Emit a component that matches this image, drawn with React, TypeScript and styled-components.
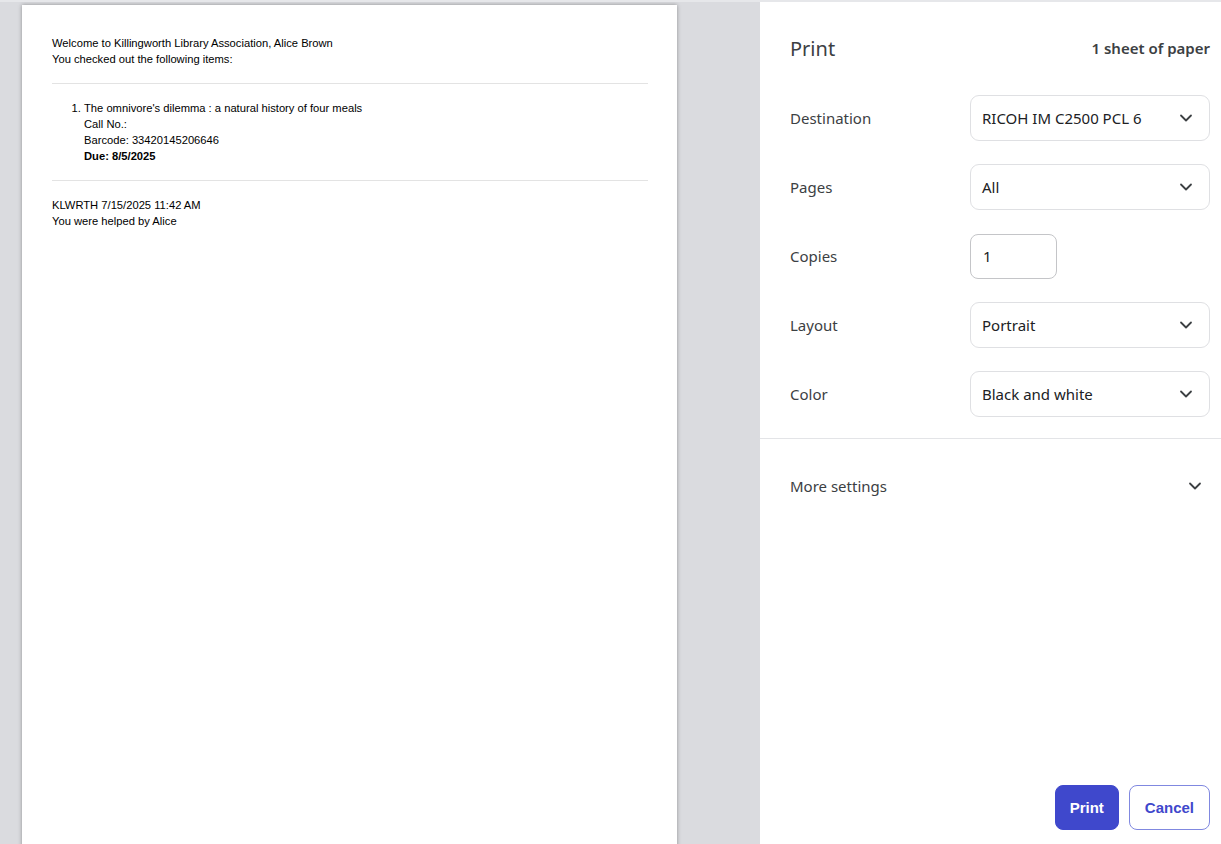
import React from 'react';
import styled, { createGlobalStyle } from 'styled-components';

const GlobalStyle = createGlobalStyle`
  html, body {
    margin: 0;
    padding: 0;
    overflow: hidden;
    background: #ffffff;
  }
`;

const Shell = styled.div`
  display: flex;
  width: 1221px;
  height: 844px;
  overflow: hidden;
`;

const Preview = styled.section`
  width: 760px;
  flex-shrink: 0;
  background-color: #dadbdf;
  border-top: 2px solid #e6e7ea;
  padding: 3px 0 0 22px;
  box-sizing: border-box;
  overflow: hidden;
`;

const Sheet = styled.div`
  width: 655px;
  height: 900px;
  background-color: white;
  box-shadow: 0 0 4px rgba(0, 0, 0, 0.35);
  padding: 30px 29px 0 30px;
  box-sizing: border-box;
  font-family: 'Liberation Sans', Arial, sans-serif;
  font-size: 11.2px;
  line-height: 16px;
  color: #000;
`;

const Line = styled.div<{ $bold?: boolean }>`
  font-weight: ${({ $bold }) => ($bold ? 700 : 400)};
`;

const Rule = styled.hr`
  border: none;
  border-top: 1px solid #e3e3e3;
  margin: 0;
`;

const Block = styled.div<{ $top: number; $bottom: number }>`
  padding: ${({ $top, $bottom }) => `${$top}px 0 ${$bottom}px`};
`;

const ItemList = styled.ol`
  margin: 0;
  padding-left: 32px;
`;

const Panel = styled.aside`
  flex: 1;
  display: flex;
  flex-direction: column;
  background: white;
  border-top: 2px solid #e6e7ea;
  box-sizing: border-box;
  font-family: 'Noto Sans', 'Open Sans', sans-serif;
  color: #3c4043;
`;

const Header = styled.header`
  display: flex;
  justify-content: space-between;
  align-items: center;
  padding: 32px 11px 0 30px;
  height: 28px;
`;

const Title = styled.h1`
  margin: 0;
  font-size: 20px;
  font-weight: 400;
  color: #3c4043;
`;

const SheetCount = styled.span`
  font-size: 15px;
  font-weight: 600;
  color: #3c4043;
`;

const Settings = styled.div`
  display: flex;
  flex-direction: column;
  gap: 23px;
  padding: 33px 11px 21px 30px;
  border-bottom: 1px solid #e3e4e7;
`;

const Row = styled.div`
  display: flex;
  align-items: center;
  min-height: 46px;
`;

const Label = styled.span`
  width: 180px;
  font-size: 15px;
  color: #3c4043;
`;

const Select = styled.div`
  flex: 1;
  height: 46px;
  box-sizing: border-box;
  border: 1px solid #dfe0e3;
  border-radius: 9px;
  display: flex;
  align-items: center;
  justify-content: space-between;
  padding: 0 15px 0 11px;
  font-size: 15px;
  color: #202124;
`;

const NumberBox = styled.div`
  width: 87px;
  height: 45px;
  box-sizing: border-box;
  border: 1px solid #c4c5c8;
  border-radius: 8px;
  display: flex;
  align-items: center;
  padding-left: 12px;
  font-size: 15px;
  color: #202124;
`;

const MoreRow = styled.div`
  display: flex;
  align-items: center;
  justify-content: space-between;
  height: 46px;
  margin-top: 24px;
  padding: 0 18px 0 30px;
  font-size: 15px;
  color: #3c4043;
`;

const Footer = styled.footer`
  margin-top: auto;
  display: flex;
  justify-content: flex-end;
  gap: 10px;
  padding: 0 11px 14px 0;
`;

const Button = styled.button<{ $primary?: boolean }>`
  height: 45px;
  padding: 0 ${({ $primary }) => ($primary ? '14px' : '15px')};
  border-radius: 8px;
  font-family: 'Liberation Sans', Arial, sans-serif;
  font-size: 15px;
  font-weight: 700;
  cursor: pointer;
  background-color: ${({ $primary }) => ($primary ? '#3f48cc' : 'white')};
  color: ${({ $primary }) => ($primary ? 'white' : '#3f48cc')};
  border: 1px solid ${({ $primary }) => ($primary ? '#3f48cc' : '#8088e0')};
`;

const Chevron = () => (
  <svg width="16" height="16" viewBox="0 0 16 16" fill="none">
    <path d="M3 5.5l5 5 5-5" stroke="#3c4043" strokeWidth="1.8" strokeLinecap="round" strokeLinejoin="round" />
  </svg>
);

const selects = [
  { label: 'Destination', value: 'RICOH IM C2500 PCL 6' },
  { label: 'Pages', value: 'All' },
];

const selectsAfter = [
  { label: 'Layout', value: 'Portrait' },
  { label: 'Color', value: 'Black and white' },
];

const App = () => {
  return (
    <>
      <GlobalStyle />
      <Shell>
        <Preview>
          <Sheet>
            <Block $top={0} $bottom={16}>
              <Line>Welcome to Killingworth Library Association, Alice Brown</Line>
              <Line>You checked out the following items:</Line>
            </Block>
            <Rule />
            <Block $top={16} $bottom={16}>
              <ItemList>
                <li>
                  <Line>The omnivore's dilemma : a natural history of four meals</Line>
                  <Line>Call No.:</Line>
                  <Line>Barcode: 33420145206646</Line>
                  <Line $bold>Due: 8/5/2025</Line>
                </li>
              </ItemList>
            </Block>
            <Rule />
            <Block $top={16} $bottom={0}>
              <Line>KLWRTH 7/15/2025 11:42 AM</Line>
              <Line>You were helped by Alice</Line>
            </Block>
          </Sheet>
        </Preview>
        <Panel>
          <Header>
            <Title>Print</Title>
            <SheetCount>1 sheet of paper</SheetCount>
          </Header>
          <Settings>
            {selects.map((s) => (
              <Row key={s.label}>
                <Label>{s.label}</Label>
                <Select>
                  <span>{s.value}</span>
                  <Chevron />
                </Select>
              </Row>
            ))}
            <Row>
              <Label>Copies</Label>
              <NumberBox>1</NumberBox>
            </Row>
            {selectsAfter.map((s) => (
              <Row key={s.label}>
                <Label>{s.label}</Label>
                <Select>
                  <span>{s.value}</span>
                  <Chevron />
                </Select>
              </Row>
            ))}
          </Settings>
          <MoreRow>
            <span>More settings</span>
            <Chevron />
          </MoreRow>
          <Footer>
            <Button $primary>Print</Button>
            <Button>Cancel</Button>
          </Footer>
        </Panel>
      </Shell>
    </>
  );
};

export default App;
